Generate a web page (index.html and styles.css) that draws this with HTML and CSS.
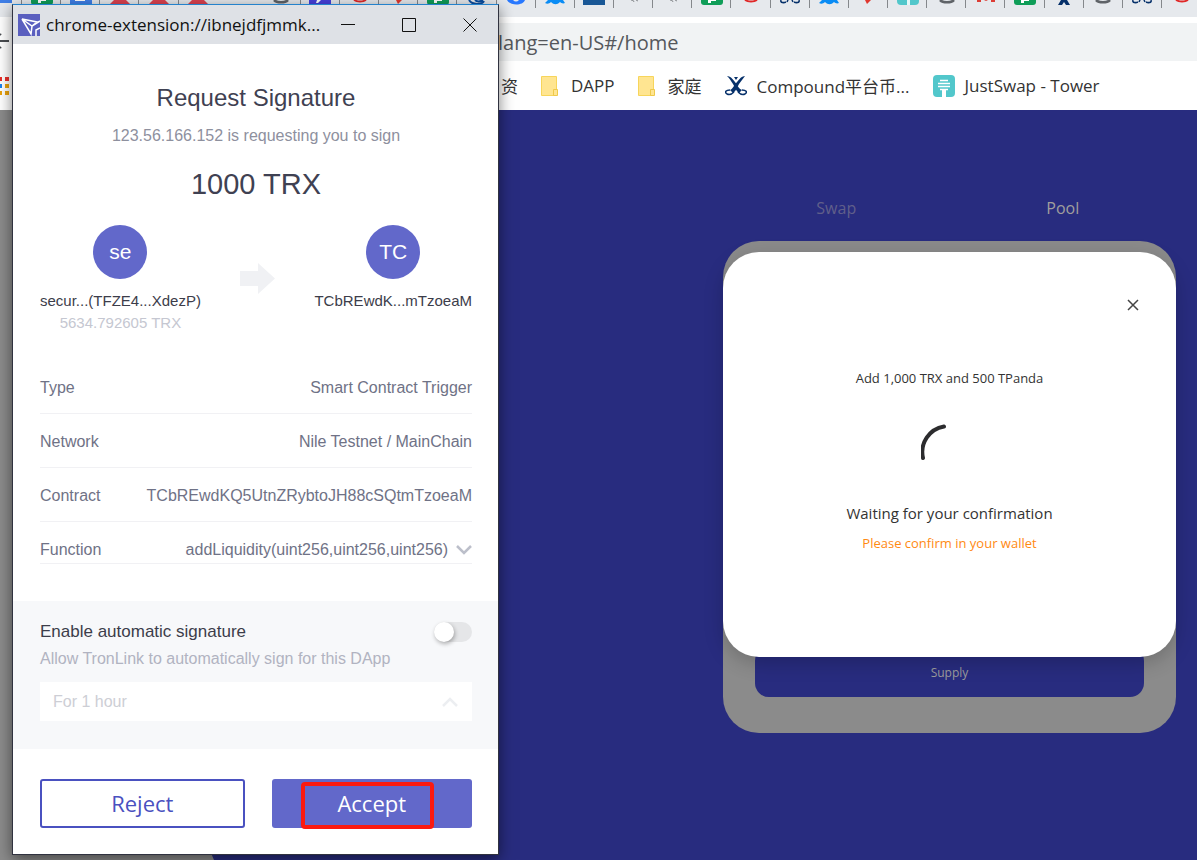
FILE: index.html
```
<!DOCTYPE html>
<html lang="en">
<head>
  <meta charset="UTF-8" />
  <meta name="viewport" content="width=device-width, initial-scale=1.0"/>
  <title>JustSwap - Pool</title>
  <link rel="stylesheet" href="styles.css">
</head>
<body>

  <!-- Shared favicons -->
  <svg class="sprite" aria-hidden="true">
    <symbol id="i-sheet" viewBox="0 0 22 5"><path d="M0 0h22v2a3 3 0 0 1-3 3H3a3 3 0 0 1-3-3z" fill="#0f9d58"/><path d="M7 0h3v3H7zM10 0h5v1h-5z" fill="#fff"/></symbol>
    <symbol id="i-doc" viewBox="0 0 22 5"><path d="M0 0h22v4H0z" fill="#3f7fe8"/><path d="M5 0h10v1H5z" fill="#fff"/></symbol>
    <symbol id="i-blue" viewBox="0 0 22 5"><path d="M0 0h22v3H0z" fill="#3f7fe8"/></symbol>
    <symbol id="i-tri" viewBox="0 0 22 5"><path d="M5 0h12l4 4H1z" fill="#dc4250"/></symbol>
    <symbol id="i-globe" viewBox="0 0 22 5"><path d="M4 0c3 3 11 3 14 0" fill="none" stroke="#5f6368" stroke-width="2.5"/></symbol>
    <symbol id="i-pay" viewBox="0 0 22 5"><path d="M0 0h22v5H0z" fill="#4640dc"/><path d="M8 0h4l-3 3H7z" fill="#fff"/></symbol>
    <symbol id="i-ring" viewBox="0 0 22 5"><path d="M5 0c3 2 9 2 12 0" fill="none" stroke="#e02828" stroke-width="2"/></symbol>
    <symbol id="i-pin" viewBox="0 0 22 5"><path d="M8 0h6l-4 4z" fill="#e0372e"/></symbol>
    <symbol id="i-edge" viewBox="0 0 22 5"><path d="M3 0c3 5 13 5 15 1M9 0c3 3 6 1 8 0" fill="none" stroke="#0b4ea2" stroke-width="2"/></symbol>
    <symbol id="i-chrome" viewBox="0 0 22 5"><path d="M2 0h18c-2 6-15 6-18 0z" fill="#2979ff"/><path d="M8 0h6c-2 2-4 2-6 0z" fill="#e6e9ed"/></symbol>
    <symbol id="i-wave" viewBox="0 0 22 5"><path d="M4 0h15l2 3c-2 1-4 0-5-1-3 3-6 3-9 0-2 2-4 2-6 1z" fill="#0a8cf5"/></symbol>
    <symbol id="i-block" viewBox="0 0 22 5"><path d="M0 0h22v5H0z" fill="#195796"/></symbol>
    <symbol id="i-squig" viewBox="0 0 22 5"><path d="M8 0q3 0 3 2M13 0l2 1" fill="none" stroke="#85888c"/></symbol>
    <symbol id="i-comp" viewBox="0 0 22 5"><path d="M2 0c-1 3 3 3 5 2M20 0c1 3-3 3-5 2M9 0L8 2M13 0l1 2" fill="none" stroke="#06306a" stroke-width="1.500"/></symbol>
    <symbol id="i-just" viewBox="0 0 22 5"><path d="M0 0h22v1a4 4 0 0 1-4 4H4a4 4 0 0 1-4-4z" fill="#52c7cb"/><path d="M10 0h3v5h-3z" fill="#e6f8f8"/></symbol>
    <symbol id="i-mail" viewBox="0 0 22 5"><path d="M2 0h4v2H2zM16 0h4v2h-4zM9 0h4l-2 1z" fill="#dc3c35"/></symbol>
    <symbol id="i-legs" viewBox="0 0 22 5"><path d="M8 0h6l3 5h-4l-2-3-2 3H5z" fill="#06306a"/></symbol>
    <symbol id="i-folder" viewBox="0 0 17 20"><path d="M.5.500h15v19H.5z" fill="#ffe591" stroke="#f7d55b"/><path d="M12.500 13.500h4v6h-4z" fill="#ffe591" stroke="#efc94b"/></symbol>
  </svg>

  <!-- Browser -->
  <header class="browser">
    <div class="tab-strip">
      <span class="tab first"><svg><use href="#i-blue"/></svg></span>
      <span class="tab"><svg><use href="#i-sheet"/></svg></span>
      <span class="tab"><svg><use href="#i-doc"/></svg></span>
      <span class="tab"><svg><use href="#i-tri"/></svg></span>
      <span class="tab"><svg><use href="#i-tri"/></svg></span>
      <span class="tab plain"><svg><use href="#i-tri"/></svg></span>
      <span class="tab current"></span>
      <span class="tab"><svg><use href="#i-globe"/></svg></span>
      <span class="tab"><svg><use href="#i-pay"/></svg></span>
      <span class="tab"><svg><use href="#i-ring"/></svg></span>
      <span class="tab"><svg><use href="#i-pin"/></svg></span>
      <span class="tab"><svg><use href="#i-sheet"/></svg></span>
      <span class="tab"><svg><use href="#i-edge"/></svg></span>
      <span class="tab"><svg><use href="#i-chrome"/></svg></span>
      <span class="tab"><svg><use href="#i-wave"/></svg></span>
      <span class="tab"><svg><use href="#i-block"/></svg></span>
      <span class="tab"><svg><use href="#i-squig"/></svg></span>
      <span class="tab"><svg><use href="#i-squig"/></svg></span>
      <span class="tab"><svg><use href="#i-sheet"/></svg></span>
      <span class="tab"><svg><use href="#i-ring"/></svg></span>
      <span class="tab"><svg><use href="#i-comp"/></svg></span>
      <span class="tab"><svg><use href="#i-wave"/></svg></span>
      <span class="tab"><svg><use href="#i-pin"/></svg></span>
      <span class="tab"><svg><use href="#i-just"/></svg></span>
      <span class="tab"><svg><use href="#i-globe"/></svg></span>
      <span class="tab"><svg><use href="#i-mail"/></svg></span>
      <span class="tab"><svg><use href="#i-sheet"/></svg></span>
      <span class="tab"><svg><use href="#i-legs"/></svg></span>
      <span class="tab"><svg><use href="#i-globe"/></svg></span>
      <span class="tab"><svg><use href="#i-comp"/></svg></span>
      <span class="tab"><svg><use href="#i-ring"/></svg></span>
    </div>

    <div class="toolbar">
      <button class="back" aria-label="Back"><svg width="9" height="20" viewBox="0 0 9 20"><path d="M0 9h9M0 2l1 1M0 16l1-1" stroke="#4a4d51" stroke-width="2"/></svg></button>
      <input class="address" type="text" aria-label="Address" value="lang=en-US#/home">
    </div>

    <nav class="bookmarks">
      <svg class="apps" width="9" height="18" viewBox="0 0 9 18"><path d="M0 0h2v4H0zM5 0h4v4H5z" fill="#e8302a"/><path d="M0 7h2v4H0z" fill="#1a82ef"/><path d="M5 7h4v4H5zM0 14h2v4H0zM5 14h4v4H5z" fill="#eaa20c"/></svg>
      <a href="#">资</a>
      <a href="#"><svg width="17" height="20"><use href="#i-folder"/></svg>DAPP</a>
      <a href="#"><svg width="17" height="20"><use href="#i-folder"/></svg>家庭</a>
      <a href="#" class="site">
        <svg width="22" height="20" viewBox="0 0 22 20"><path d="M2 0c3 0 5 2 8 6 3 4 4 7 7 8l-3 3c-3-2-4-6-6-9C6 5 5 3 2 0zM20 0c-2 3-4 5-6 8-2 4-3 7-6 9l-3-3c3-1 4-5 7-8 3-4 5-6 8-6z" fill="#06306a"/><path d="M9 1h4l-2 3z" fill="#06306a"/><path d="M5 14c-4 0-6 2-3 4 2 1 5 0 7-2M17 14c4 0 6 2 3 4-2 1-5 0-7-2" fill="none" stroke="#06306a" stroke-width="1.500"/></svg>
        Compound平台币...
      </a>
      <a href="#" class="site">
        <svg width="22" height="22" viewBox="0 0 22 22"><rect width="22" height="22" rx="4" fill="#52c7cb"/><path d="M7 5.500h8M5 8.500h12M5 11.500h12M7 14.500h8" stroke="#fff" stroke-width="1.700"/><path d="M9 15h4v7H9z" fill="#fff"/></svg>
        JustSwap - Tower
      </a>
    </nav>
  </header>

  <!-- Swap page -->
  <main class="page">
    <section class="exchange">
      <nav class="exchange-tabs">
        <a href="#swap">Swap</a>
        <a href="#pool" class="active">Pool</a>
      </nav>
      <div class="pool-card">
        <button class="supply">Supply</button>
        <div class="modal" role="dialog" aria-label="Waiting for your confirmation">
          <button class="modal-close" aria-label="Close"><svg width="12" height="12" viewBox="0 0 12 12"><path d="M1 1l10 10M11 1L1 11" stroke="#444" stroke-width="1.500"/></svg></button>
          <p class="modal-info">Add 1,000 TRX and 500 TPanda</p>
          <svg class="spinner" width="58" height="58" viewBox="0 0 58 58"><path d="M23 3.500A26 26 0 0 0 2 35" fill="none" stroke="#2c2c2e" stroke-width="4" stroke-linecap="round"/></svg>
          <p class="modal-wait">Waiting for your confirmation</p>
          <p class="modal-hint">Please confirm in your wallet</p>
        </div>
      </div>
    </section>
  </main>

  <!-- Wallet window -->
  <div class="wallet">
    <div class="title-bar">
      <svg width="22" height="22" viewBox="0 0 22 22"><rect width="22" height="22" fill="#5a5fbf"/><path d="M4 5l9 15 1-8zM4 5l10 7 5-4zM14 12l8-5M18 22v-6l4-2" fill="none" stroke="#fff" stroke-width="1.500"/></svg>
      <span class="title">chrome-extension://ibnejdfjmmk...</span>
      <div class="window-buttons">
        <button aria-label="Minimize"><svg width="14" height="14" viewBox="0 0 14 14"><path d="M0 6.500h14" stroke="#111"/></svg></button>
        <button aria-label="Maximize"><svg width="14" height="14" viewBox="0 0 14 14"><path d="M.5.500h13v13H.5z" fill="none" stroke="#111"/></svg></button>
        <button aria-label="Close"><svg width="14" height="14" viewBox="0 0 14 14"><path d="M.5.500l13 13M13.500.500l-13 13" stroke="#111"/></svg></button>
      </div>
    </div>

    <div class="request">
      <h1>Request Signature</h1>
      <p class="origin">123.56.166.152 is requesting you to sign</p>
      <p class="amount">1000 TRX</p>

      <div class="parties">
        <div class="party">
          <span class="avatar">se</span>
          <span class="name">secur...(TFZE4...XdezP)</span>
          <span class="balance">5634.792605 TRX</span>
        </div>
        <svg class="arrow" width="35" height="31" viewBox="0 0 35 31"><path d="M0 8h18V0l17 15.500L18 31v-8H0z" fill="#f0f1f4"/></svg>
        <div class="party">
          <span class="avatar">TC</span>
          <span class="name">TCbREwdK...mTzoeaM</span>
        </div>
      </div>

      <dl class="details">
        <div><dt>Type</dt><dd>Smart Contract Trigger</dd></div>
        <div><dt>Network</dt><dd>Nile Testnet / MainChain</dd></div>
        <div><dt>Contract</dt><dd>TCbREwdKQ5UtnZRybtoJH88cSQtmTzoeaM</dd></div>
        <div>
          <dt>Function</dt>
          <dd>addLiquidity(uint256,uint256,uint256)
            <button class="expand" aria-label="Show parameters"><svg width="16" height="10" viewBox="0 0 16 10"><path d="M1 1l7 7 7-7" fill="none" stroke="#bcbfca" stroke-width="2.500"/></svg></button>
          </dd>
        </div>
      </dl>
    </div>

    <div class="auto-sign">
      <div class="auto-head">
        <label for="auto">Enable automatic signature</label>
        <input type="checkbox" id="auto" class="toggle">
      </div>
      <p>Allow TronLink to automatically sign for this DApp</p>
      <div class="duration">
        <select aria-label="Duration">
          <option>For 1 hour</option>
        </select>
        <svg width="16" height="10" viewBox="0 0 16 10"><path d="M1 9l7-7 7 7" fill="none" stroke="#eceef1" stroke-width="2.500"/></svg>
      </div>
    </div>

    <div class="actions">
      <button class="reject">Reject</button>
      <button class="accept">Accept<span class="marker"></span></button>
    </div>
  </div>

</body>
</html>
```
FILE: styles.css
```
/* Global Styles */
* {
  box-sizing: border-box;
  margin: 0;
  padding: 0;
}

body {
  position: relative;
  display: flex;
  flex-direction: column;
  min-height: 100vh;
  overflow: hidden;
  font-family: "Open Sans", "Noto Sans CJK SC", sans-serif;
  color: #333;
}

button {
  border: none;
  background: transparent;
  font-family: inherit;
  cursor: pointer;
}

a {
  color: inherit;
  text-decoration: none;
}

svg {
  display: block;
  flex-shrink: 0;
}

.sprite {
  position: absolute;
  width: 0;
  height: 0;
}

/* Browser */
.browser {
  background: #fff;
}

.tab-strip {
  display: flex;
  height: 17px;
  margin-right: -4px;
  background: #e6e9ed;
}

.tab {
  position: relative;
  display: flex;
  flex: 1 1 0;
  justify-content: center;
}

.tab::after {
  content: '';
  position: absolute;
  top: 0;
  right: 0;
  width: 1px;
  height: 8px;
  background: #85888c;
}

.tab svg {
  width: 22px;
  height: 5px;
}

.tab.first {
  flex: 0 0 22px;
  justify-content: flex-start;
}

.tab.first svg {
  margin-left: -10px;
}

.tab.current {
  flex: 0 0 44px;
}

.tab.plain::after,
.tab.current::after {
  display: none;
}

.toolbar {
  display: flex;
  align-items: center;
  height: 38px;
  margin-top: 6px;
}

.back {
  width: 12px;
}

.address {
  flex: 1;
  height: 38px;
  padding-left: 486px;
  border: none;
  background: #f1f3f4;
  color: #55585c;
  font-family: inherit;
  font-size: 20px;
}

.bookmarks {
  display: flex;
  align-items: center;
  height: 49px;
  font-size: 17px;
  white-space: nowrap;
}

.bookmarks .apps {
  margin-right: 492px;
}

.bookmarks a {
  display: flex;
  align-items: center;
  gap: 13px;
  margin-right: 23px;
}

.bookmarks .site {
  gap: 10px;
}

/* Swap page */
.page {
  position: relative;
  display: flex;
  flex: 1;
  justify-content: flex-end;
  padding: 86px 21px 0 0;
  background: #282c7f;
}

.page::before {
  content: '';
  position: absolute;
  top: 0;
  bottom: 0;
  left: 0;
  width: 214px;
  background: #8b8b8b;
  clip-path: polygon(0 0, 50% 0, 50% 98%, 97% 98%, 100% 100%, 0 100%);
}

.exchange {
  width: 453px;
}

.exchange-tabs {
  display: grid;
  grid-template-columns: 1fr 1fr;
  text-align: center;
  font-size: 16px;
  line-height: 24px;
  color: #605f8a;
}

.exchange-tabs .active {
  color: #a09f9d;
}

.pool-card {
  position: relative;
  display: flex;
  align-items: flex-end;
  height: 492px;
  margin-top: 21px;
  padding: 0 32px 36px;
  border-radius: 36px;
  background: #8b8b8b;
}

.supply {
  flex: 1;
  height: 50px;
  border-radius: 14px;
  background: #282c7f;
  color: #9d9d9d;
  font-size: 12px;
}

.modal {
  position: absolute;
  top: 11px;
  left: 0;
  right: 0;
  display: flex;
  flex-direction: column;
  align-items: center;
  height: 405px;
  padding-top: 47px;
  border-radius: 36px;
  background: #fff;
  box-shadow: 0 6px 20px rgba(0, 0, 0, 0.2);
  text-align: center;
}

.modal-close {
  align-self: flex-end;
  width: 12px;
  height: 12px;
  margin-right: 37px;
}

.modal-info {
  margin-top: 57px;
  font-size: 13px;
  line-height: 20px;
}

.spinner {
  margin-top: 35px;
}

.modal-wait {
  margin-top: 20px;
  font-size: 15px;
  line-height: 24px;
}

.modal-hint {
  margin-top: 8px;
  font-size: 13px;
  line-height: 20px;
  color: #ff8a12;
}

/* Wallet window */
.wallet {
  position: absolute;
  top: 4px;
  left: 12px;
  width: 487px;
  border: 1px solid #30323f;
  border-top-color: #2482cc;
  background: #fff;
  box-shadow: 0 4px 14px rgba(0, 0, 0, 0.5);
  font-family: "Liberation Sans", sans-serif;
}

.title-bar {
  display: flex;
  align-items: center;
  height: 39px;
  padding: 0 21px 0 5px;
  background: #dee1e6;
  color: #111;
  font-family: "Open Sans", sans-serif;
  font-size: 17px;
}

.title {
  margin-left: 6px;
}

.window-buttons {
  display: flex;
  gap: 47px;
  margin-left: auto;
}

.window-buttons button {
  width: 14px;
  height: 14px;
}

.request {
  padding: 39px 26px 0 27px;
  text-align: center;
}

.request h1 {
  font-size: 24px;
  font-weight: normal;
  line-height: 30px;
  color: #3f4152;
}

.origin {
  margin-top: 13px;
  font-size: 16px;
  line-height: 20px;
  color: #8e909e;
}

.amount {
  margin-top: 20px;
  font-size: 29px;
  line-height: 36px;
  color: #3f4152;
}

.parties {
  display: flex;
  justify-content: space-between;
  margin-top: 23px;
}

.party {
  display: flex;
  flex-direction: column;
  align-items: center;
  font-size: 15px;
  line-height: 22px;
}

.avatar {
  width: 54px;
  height: 54px;
  margin-bottom: 11px;
  border-radius: 50%;
  background: #6268ca;
  color: #fff;
  font-size: 21px;
  line-height: 54px;
}

.name {
  color: #3c3d4a;
}

.balance {
  color: #c5c7d1;
}

.arrow {
  margin-top: 38px;
}

.details {
  margin-top: 26px;
  font-size: 16px;
  line-height: 20px;
  color: #6f7286;
}

.details div {
  display: flex;
  justify-content: space-between;
  padding: 18px 0 15px;
  border-bottom: 1px solid #f1f1f4;
}

.details div:last-child {
  padding-bottom: 3px;
}

.details dd {
  display: flex;
  align-items: center;
  gap: 8px;
}

.expand {
  width: 16px;
  height: 10px;
}

.auto-sign {
  margin-top: 37px;
  padding: 19px 26px 28px 27px;
  background: #f7f8fa;
}

.auto-head {
  display: flex;
  align-items: center;
  justify-content: space-between;
  font-size: 17px;
  line-height: 24px;
  color: #3c3d4a;
}

.toggle {
  appearance: none;
  width: 38px;
  height: 20px;
  border-radius: 10px;
  background: #e5e6e8;
  cursor: pointer;
}

.toggle::before {
  content: '';
  display: block;
  width: 20px;
  height: 20px;
  border-radius: 50%;
  background: #fff;
  box-shadow: 1px 2px 4px rgba(0, 0, 0, 0.3);
}

.toggle:checked::before {
  margin-left: 18px;
}

.auto-sign p {
  margin-top: 5px;
  font-size: 16px;
  line-height: 20px;
  color: #b1b3c1;
}

.duration {
  display: flex;
  align-items: center;
  height: 39px;
  margin-top: 13px;
  padding: 0 14px 0 13px;
  background: #fff;
}

.duration select {
  flex: 1;
  height: 39px;
  border: none;
  appearance: none;
  background: transparent;
  color: #cdced5;
  font-family: inherit;
  font-size: 16px;
}

.actions {
  display: flex;
  gap: 27px;
  padding: 30px 26px 26px 27px;
  font-family: "Open Sans", sans-serif;
}

.actions button {
  position: relative;
  flex: 1;
  height: 49px;
  padding-bottom: 2px;
  border-radius: 3px;
  font-size: 22px;
}

.reject {
  border: 2px solid #4a51c0;
  color: #4a51c0;
}

.accept {
  background: #6268ca;
  color: #fff;
}

/* Highlight around the accept label */
.marker {
  position: absolute;
  top: 3px;
  right: 38px;
  bottom: -1px;
  left: 29px;
  border: 4px solid #fb1a10;
  border-radius: 4px;
}
```
